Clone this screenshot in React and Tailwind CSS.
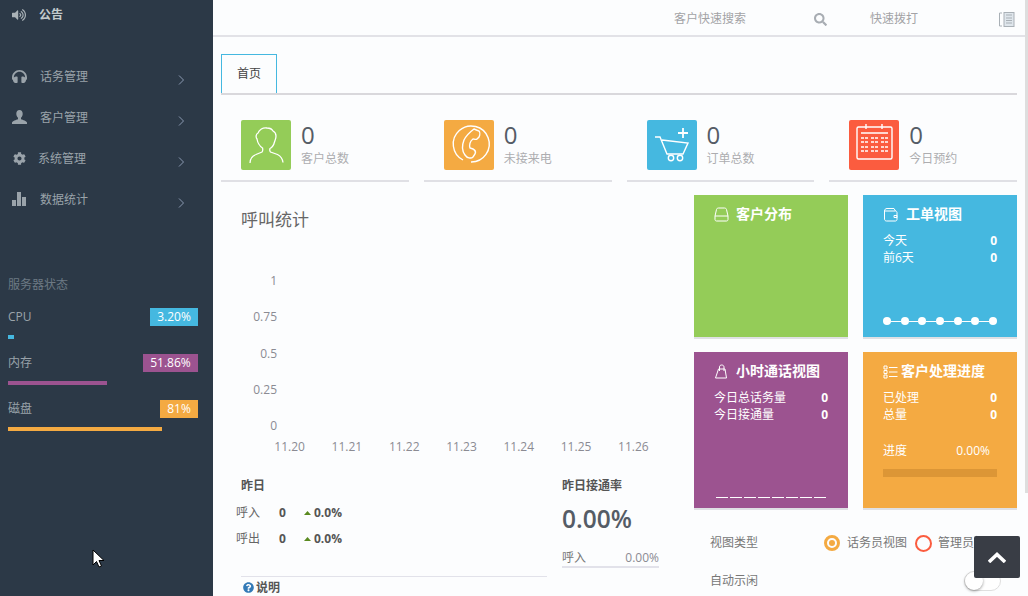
import React from 'react';
import { FaCog, FaHeadphones, FaQuestionCircle, FaSearch, FaVolumeUp } from 'react-icons/fa';

function SideUser() {
  return (
    <svg viewBox="0 0 15 15" className="w-[15px] h-[15px]" fill="currentColor">
      <path d="M7.500 0c2 0 3.200 1.600 3.200 3.800 0 1.700-.7 3.200-1.700 4v1.400c2 .8 5.500 1.500 6 3.300V14H0v-1.500c.5-1.800 4-2.500 6-3.300V7.800c-1-.8-1.700-2.300-1.700-4C4.300 1.600 5.500 0 7.500 0z" />
    </svg>
  );
}

function SideBars() {
  return (
    <svg viewBox="0 0 15 15" className="w-[15px] h-[15px]" fill="currentColor">
      <rect x="0" y="8" width="4" height="6" />
      <rect x="5" y="0" width="4" height="14" />
      <rect x="10" y="5" width="4" height="9" />
    </svg>
  );
}

const nav = [
  { name: '话务管理', icon: <FaHeadphones className="text-[15px]" />, cls: 'ml-[13px]' },
  { name: '客户管理', icon: <SideUser />, cls: 'ml-[13px]' },
  { name: '系统管理', icon: <FaCog className="text-[13px]" />, cls: 'ml-[11px]' },
  { name: '数据统计', icon: <SideBars />, cls: 'ml-[13px]' },
];

const server = [
  { name: 'CPU', value: '3.20%', width: 3.2, badge: 'bg-[#45b8e0] w-[48px]', bar: 'bg-[#45b8e0]' },
  { name: '内存', value: '51.86%', width: 51.86, badge: 'bg-[#9c5390] w-[55px]', bar: 'bg-[#9c5390]' },
  { name: '磁盘', value: '81%', width: 81, badge: 'bg-[#f4aa42] w-[38px]', bar: 'bg-[#f4aa42]' },
];

const stats = [
  { label: '客户总数', color: 'bg-[#94cc58]', icon: <UserIcon /> },
  { label: '未接来电', color: 'bg-[#f4aa42]', icon: <PhoneIcon /> },
  { label: '订单总数', color: 'bg-[#45b8e0]', icon: <CartIcon /> },
  { label: '今日预约', color: 'bg-[#fb5c3f]', icon: <CalendarIcon /> },
];

function UserIcon() {
  return (
    <svg viewBox="0 0 50 50" className="w-[50px] h-[50px]" fill="none" stroke="white" strokeWidth="1.3">
      <path d="M9 43c0-5 2-7 6-8.500l6-2.500c1-1 1-2 .5-4-3-2-5-6-5.500-9-1.500-2-1-5 1-6 1-3 5-6 9-5 3 0 5 1 6 3 2 1 3 3 3 5 0 3-1 4-1.500 6-.5 2-1.500 5-4.500 6.500-.5 1.500-.5 2.500.5 3.500l7 2.500c3 1.500 5 4 5.500 8" />
    </svg>
  );
}

function PhoneIcon() {
  return (
    <svg viewBox="0 0 50 50" className="w-[50px] h-[50px]" fill="none" stroke="white" strokeWidth="1.4">
      <path d="M19 40a18 18 0 1 1 8 2" />
      <path d="M30 9l5 2c1 1 1 4 0 6l-2 2c-1 1-3 0-4 0-3 2-4 6-3 9l3 1c2 1 3 3 2 5l-2 3c-2 2-6 1-8-2-3-4-3-10-1-15 2-4 6-8 10-11z" />
    </svg>
  );
}

function CartIcon() {
  return (
    <svg viewBox="0 0 50 50" className="w-[50px] h-[50px]" fill="none" stroke="white" strokeWidth="1.4">
      <path d="M8 17h5l7 17h16l5-11-26-3" />
      <path d="M36 8v10M31 13h10" strokeWidth="1.8" />
      <circle cx="24" cy="38" r="2.700" />
      <circle cx="33" cy="38" r="2.700" />
    </svg>
  );
}

function CalendarIcon() {
  return (
    <svg viewBox="0 0 50 50" className="w-[50px] h-[50px]" fill="none" stroke="white" strokeWidth="1.4">
      <rect x="8" y="7" width="35" height="32" rx="1.500" />
      <path d="M17 4v5M33 4v5M12 13h27" />
      <path d="M12 18h7M22 18h7M32 18h7M12 22h7M22 22h7M32 22h7M12 27h7M22 27h7M32 27h7M12 31h7M22 31h7M32 31h7" strokeDasharray="3 1" />
    </svg>
  );
}

function TileIcon({ type }) {
  return (
    <svg viewBox="0 0 15 15" className="w-[15px] h-[15px] shrink-0" fill="none" stroke="white" strokeWidth="1">
      {type === 'drive' && <path d="M1 9l1.500-6.500c.2-1 1-1.500 2-1.500h6c1 0 1.800.5 2 1.500L14 9M1 9h13v3.500c0 .8-.5 1.500-1.500 1.500h-10C1.500 14 1 13.300 1 12.500z" />}
      {type === 'wallet' && <path d="M1.500 4c0-1.500 1-2.500 2.500-2.500h7l1.500 2.500M1.500 4h11c.8 0 1.500.7 1.500 1.500v7c0 .8-.7 1.500-1.500 1.500h-9c-1.200 0-2-.8-2-2zM11 8.500h3v2h-3z" />}
      {type === 'bag' && <path d="M3 14h9.500L11 5H4.500L1.500 14zM5.500 7V3c0-1.300 1-2 2.200-2s2.300.7 2.300 2v4" />}
      {type === 'list' && <path d="M1 2h3v3H1zM1 6.500h3v3H1zM1 11h3v3H1zM6 3.500h8.500M6 8h8.500M6 12.500h8.500" />}
    </svg>
  );
}

function Tile({ color, icon, title, gap = 'gap-[7px]', height, children }) {
  return (
    <div className={`${color} ${height} border-b-2 border-[#dfe0e4] px-5 pt-[12px] flex flex-col text-white text-xs`}>
      <div className={`flex items-center ${gap} h-[14px] font-bold text-sm whitespace-nowrap`}>
        <TileIcon type={icon} />
        <span>{title}</span>
      </div>
      {children}
    </div>
  );
}

function TileRow({ label, value }) {
  return (
    <div className="flex justify-between h-[17px] leading-[17px]">
      <span>{label}</span>
      <span className="font-bold">{value}</span>
    </div>
  );
}

export default function App() {
  return (
    <div className="relative flex h-[596px] w-[1028px] overflow-hidden bg-[#fcfdfe] font-['Open_Sans','Noto_Sans_CJK_SC',sans-serif] text-xs">
      {/* sidebar */}
      <aside className="w-[213px] shrink-0 bg-[#2c3947] text-[#9aa3aa]">
        <div className="flex items-center h-[14px] mt-[8px] pl-[12px] text-[#c3cacd] font-bold">
          <FaVolumeUp className="text-[14px] text-[#aab2b7]" />
          <span className="ml-[13px]">公告</span>
        </div>
        <nav className="mt-[34px]">
          {nav.map((item) => (
            <div key={item.name} className="flex items-center h-[41px] pl-[12px] pr-[28px]">
              <span className="w-[15px] flex justify-center">{item.icon}</span>
              <span className={item.cls}>{item.name}</span>
              <svg viewBox="0 0 7 10" className="w-[7px] h-[10px] ml-auto mt-[7px]" fill="none" stroke="#8a9ab2" strokeWidth="1">
                <path d="M1 .5L5.500 5 1 9.500" />
              </svg>
            </div>
          ))}
        </nav>
        <div className="mt-[57px] pl-[8px] pr-[15px]">
          <div className="text-[#6d7984] h-[16px] leading-[16px]">服务器状态</div>
          <div className="mt-[15px] flex flex-col gap-[15px]">
            {server.map((s) => (
              <div key={s.name}>
                <div className="flex justify-between items-center h-[18px]">
                  <span>{s.name}</span>
                  <span className={`${s.badge} h-[18px] leading-[17px] text-center text-white`}>{s.value}</span>
                </div>
                <div className="mt-[9px] h-[4px]">
                  <div className={`h-full ${s.bar}`} style={{ width: `${s.width}%` }} />
                </div>
              </div>
            ))}
          </div>
        </div>
      </aside>

      {/* main */}
      <main className="flex-1 min-w-0">
        <header className="h-[37px] border-b-2 border-[#e2e2e7] flex items-center pt-[3px] text-[#a3a3a6]">
          <span className="ml-[461px] w-[140px]">客户快速搜索</span>
          <FaSearch className="text-[13px] text-[#a8adb3]" />
          <span className="ml-[43px]">快速拨打</span>
          <svg viewBox="0 0 16 15" className="ml-[81px] w-[16px] h-[15px]" fill="none" stroke="#a9b0b6" strokeWidth="1">
            <path d="M3 1H.500v13H3" />
            <rect x="5" y=".5" width="10" height="14" fill="#dfe6ec" />
            <path d="M7 3h6M7 6h6M7 8.500h6M7 11h6" />
          </svg>
        </header>

        <div className="pl-[8px] pr-[11px]">
          <div className="mt-[17px] h-[41px] border-b-2 border-[#d9d8dc]">
            <div className="w-[56px] h-[39px] border border-b-0 border-[#45b8e0] flex items-center justify-center text-[#444]">首页</div>
          </div>

          <div className="grid grid-cols-4 gap-[15px] mt-[25px]">
            {stats.map((s) => (
              <div key={s.label} className="flex pl-5 pb-[10px] border-b-2 border-[#e0e0e5]">
                <div className={`${s.color} w-[50px] h-[50px] rounded-[2px]`}>{s.icon}</div>
                <div className="ml-[10px] -mt-px">
                  <div className="text-2xl leading-[32px] text-[#555c66]">0</div>
                  <div className="text-[#adadb0] leading-[16px]">{s.label}</div>
                </div>
              </div>
            ))}
          </div>

          <div className="flex mt-[13px]">
            <section className="w-[473px] shrink-0">
              <h2 className="ml-5 mt-[13px] text-[17px] leading-[24px] text-[#666]">呼叫统计</h2>
              <div className="mt-[41px] h-[161px] w-[56px] flex flex-col justify-between text-right text-[#8b8b93] leading-[16px]">
                <span>1</span>
                <span>0.75</span>
                <span>0.5</span>
                <span>0.25</span>
                <span>0</span>
              </div>
              <div className="mt-[5px] ml-[40px] w-[401px] grid grid-cols-7 text-center text-[#8b8b93] leading-[16px]">
                {['11.20', '11.21', '11.22', '11.23', '11.24', '11.25', '11.26'].map((d) => (
                  <span key={d}>{d}</span>
                ))}
              </div>

              <div className="flex mt-[23px]">
                <div className="w-[326px] pl-[15px]">
                  <div className="ml-[5px] font-bold text-[#555] leading-[16px]">昨日</div>
                  <div className="mt-[6px]">
                    {['呼入', '呼出'].map((label) => (
                      <div key={label} className="flex items-center h-[26px]">
                        <span className="w-[43px] text-[#666]">{label}</span>
                        <span className="w-[25px] font-bold text-[#555]">0</span>
                        <svg viewBox="0 0 7 4" className="w-[7px] h-[4px]"><path d="M3.500 0L7 4H0z" fill="#5a8a20" /></svg>
                        <span className="ml-[3px] font-bold text-[#555]">0.0%</span>
                      </div>
                    ))}
                  </div>
                  <div className="ml-[5px] mt-[24px] border-t border-[#e2e2ea] pt-[2px] flex items-center h-[20px] font-bold text-[#555]">
                    <FaQuestionCircle className="ml-[2px] text-[11px] text-[#337ab7]" />
                    <span className="ml-[2px]">说明</span>
                  </div>
                </div>
                <div className="ml-[15px] w-[97px]">
                  <div className="font-bold text-[#555] leading-[16px] whitespace-nowrap">昨日接通率</div>
                  <div className="mt-[7px] text-[24.5px] font-semibold leading-[36px] text-[#555c66]">0.00%</div>
                  <div className="mt-[13px] flex justify-between border-b-2 border-[#e2e2ea] h-[18px] text-[#777]">
                    <span>呼入</span>
                    <span className="text-[#8b8b93]">0.00%</span>
                  </div>
                </div>
              </div>
            </section>

            <section className="flex-1 min-w-0">
              <div className="grid grid-cols-2 gap-x-[15px] gap-y-[13px]">
                <Tile color="bg-[#94cc58]" icon="drive" title="客户分布" height="h-[144px]" />
                <Tile color="bg-[#45b8e0]" icon="wallet" title="工单视图" gap="gap-2" height="h-[144px]">
                  <div className="mt-[11px]">
                    <TileRow label="今天" value="0" />
                    <TileRow label="前6天" value="0" />
                  </div>
                  <div className="mt-auto mb-[12px] flex items-center">
                    {[0, 1, 2, 3, 4, 5].map((i) => (
                      <React.Fragment key={i}>
                        <span className="w-2 h-2 rounded-full bg-white" />
                        <span className="flex-1 h-px bg-white" />
                      </React.Fragment>
                    ))}
                    <span className="w-2 h-2 rounded-full bg-white" />
                  </div>
                </Tile>
                <Tile color="bg-[#9c5390]" icon="bag" title="小时通话视图" height="h-[158px]">
                  <div className="mt-[11px]">
                    <TileRow label="今日总话务量" value="0" />
                    <TileRow label="今日接通量" value="0" />
                  </div>
                  <div className="mt-auto mb-[10px] mx-[2px] flex gap-[2px]">
                    {[0, 1, 2, 3, 4, 5, 6, 7].map((i) => (
                      <span key={i} className="flex-1 h-px bg-white" />
                    ))}
                  </div>
                </Tile>
                <Tile color="bg-[#f4aa42]" icon="list" title="客户处理进度" gap="gap-[3px]" height="h-[158px]">
                  <div className="mt-[11px]">
                    <TileRow label="已处理" value="0" />
                    <TileRow label="总量" value="0" />
                  </div>
                  <div className="mt-[19px] flex justify-between pr-[7px] h-[17px] leading-[17px]">
                    <span>进度</span>
                    <span>0.00%</span>
                  </div>
                  <div className="mt-[10px] h-[8px] bg-[#dc9636]" />
                </Tile>
              </div>

              <div className="pl-[16px] pt-[23px] text-[#777]">
                <div className="flex items-center h-[20px] whitespace-nowrap">
                  <span className="w-[114px]">视图类型</span>
                  <span className="w-4 h-4 rounded-full border-[3px] border-[#f4aa42] flex items-center justify-center">
                    <span className="w-[6px] h-[6px] rounded-full bg-[#f4aa42]" />
                  </span>
                  <span className="ml-[7px]">话务员视图</span>
                  <span className="ml-[8px] w-[17px] h-[17px] rounded-full border-[2.5px] border-[#fb5c3f]" />
                  <span className="ml-[6px]">管理员视图</span>
                </div>
                <div className="flex items-center justify-between h-[20px] mt-[18px] pr-[16px]">
                  <span>自动示闲</span>
                  <span className="w-[37px] h-[20px] rounded-full border border-[#dfdfdf] bg-white">
                    <span className="block w-[18px] h-[18px] rounded-full bg-white shadow-[0_1px_3px_rgba(0,0,0,0.4)]" />
                  </span>
                </div>
              </div>
            </section>
          </div>
        </div>
      </main>

      {/* page scrollbar */}
      <div className="absolute right-0 top-0 w-[3px] h-[493px] bg-[#dedede]" />

      {/* back to top */}
      <button className="absolute left-[974px] top-[536px] w-[46px] h-[42px] rounded-[2px] bg-[#393d45] flex items-center justify-center">
        <svg viewBox="0 0 18 11" className="w-[18px] h-[11px]" fill="none" stroke="white" strokeWidth="3.500">
          <path d="M1 10l8-7.500 8 7.500" />
        </svg>
      </button>

      {/* mouse cursor */}
      <svg viewBox="0 0 13 19" className="absolute left-[92px] top-[549px] w-[13px] h-[19px]">
        <path d="M1 1v15l3.500-3.500 2.500 5.500 2.500-1-2.500-5.500h5z" fill="white" stroke="black" strokeWidth="1" />
      </svg>
    </div>
  );
}
